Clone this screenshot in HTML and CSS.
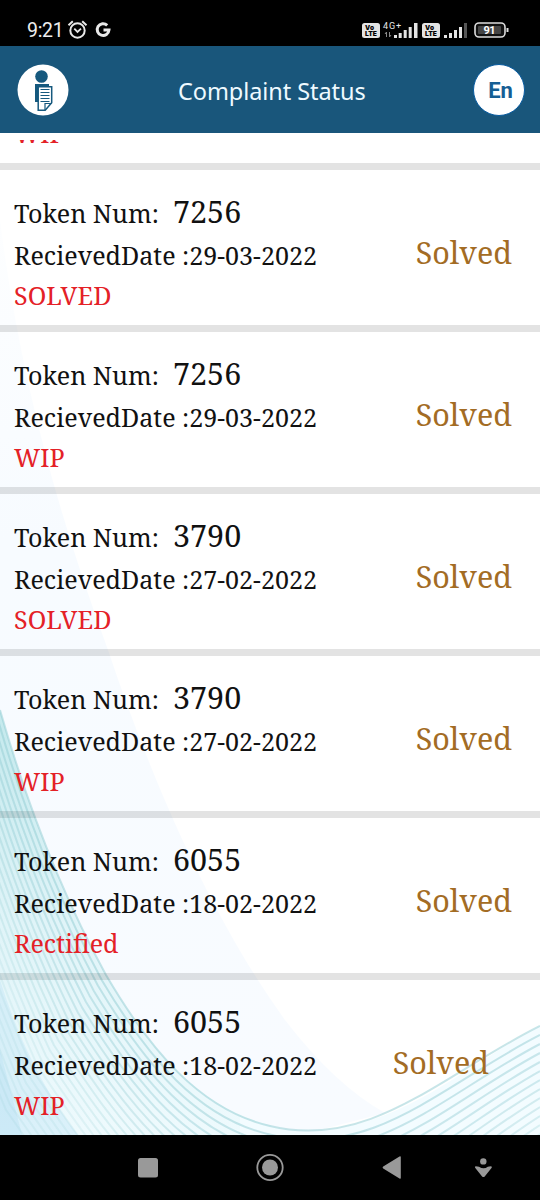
FILE: index.html
```html
<!DOCTYPE html>
<html lang="en">
<head>
<meta charset="utf-8">
<title>Complaint Status</title>
<link rel="stylesheet" href="styles.css">
</head>
<body>
<div class="phone">
  <div class="statusbar">
    <span class="clock">9:21</span>
    <svg class="status-icons" width="44" height="20" viewBox="0 0 44 20" fill="none" stroke="#e8e8e8">
      <circle cx="10.500" cy="10.500" r="7.200" stroke-width="2"/>
      <path d="M1.500 5.200 5.800 1.300M15.200 1.300 19.500 5.200" stroke-width="2"/>
      <path d="m7.300 8.700 3.200 3.200 3.500-3.200" stroke-width="1.800"/>
      <path d="M40.200 5.300A5.900 5.900 0 1 0 42 10H36.500" stroke-width="3"/>
    </svg>
    <svg class="signals" width="150" height="24" viewBox="0 0 150 24">
      <g fill="#e4e4e4">
        <rect x="2" y="5" width="18" height="15" rx="2.500"/>
        <rect x="62" y="5" width="18" height="15" rx="2.500"/>
        <path d="M34 17h3v3h-3zM38.700 15h3v5h-3zM43.700 12h3v8h-3zM48.700 9h3v11h-3zM54 5h3.500v15H54z"/>
        <path d="M84 17h3v3h-3zM89 15h3v5h-3zM94 12h3v8h-3zM99 9h3v11h-3z"/>
      </g>
      <path d="M104 5h3v15h-3z" fill="#555"/>
      <g class="volte"><text x="5" y="11.800" textLength="9">Vo</text><text x="5" y="18.300" textLength="12" lengthAdjust="spacingAndGlyphs">LTE</text>
      <text x="65" y="11.800" textLength="9">Vo</text><text x="65" y="18.300" textLength="12" lengthAdjust="spacingAndGlyphs">LTE</text></g>
      <text class="network" x="23" y="10.500" textLength="18">4G+</text>
      <path d="M26.500 19v-5l-1.500 2M29.500 14v5l1.500-2" stroke="#888" fill="none"/>
      <rect x="115" y="5" width="30" height="14" rx="4" fill="#111" stroke="#ddd" stroke-width="1.600"/>
      <rect x="118" y="8" width="23" height="8" rx="1" fill="#454545"/>
      <path d="M147.500 10v4" stroke="#ddd" stroke-width="2"/>
      <text class="charge" x="123.500" y="16" textLength="12">91</text>
    </svg>
  </div>
  <header class="header">
    <svg class="logo" width="52" height="52" viewBox="0 0 52 52">
      <circle cx="26" cy="26" r="25.500" fill="#fff"/>
      <circle cx="24.500" cy="12.500" r="6.300" fill="#16597e"/>
      <path d="M18 20h14v18H18z" fill="#16597e"/>
      <path d="M21.200 22.700h13.500v16l-6.500 7.500h-7z" fill="#fff" stroke="#16597e" stroke-width="1.500"/>
      <path d="M28 46v-6.500h6.500M23.500 25.500h9M23.500 28.500h9M23.500 31.500h9M23.500 34.500h9M23.500 37.500h9" fill="none" stroke="#16597e" stroke-width="1.200"/>
    </svg>
    <h1 class="title">Complaint Status</h1>
    <div class="language">En</div>
  </header>
  <main class="content">
    <svg class="waves" width="540" height="1002" viewBox="0 133 540 1002">
      <defs>
        <linearGradient id="teal" x1="0" y1="0" x2="0" y2="1">
          <stop offset="0" stop-color="#c4e9ed"/><stop offset=".5" stop-color="#e0f4f8"/><stop offset="1" stop-color="#eefafd"/>
        </linearGradient>
        <linearGradient id="pale" x1="0" y1="0" x2="0" y2="1">
          <stop offset="0" stop-color="#fdfeff"/><stop offset=".35" stop-color="#f7fbff"/><stop offset="1" stop-color="#f8fbff"/>
        </linearGradient>
      </defs>
      <path fill="url(#pale)" d="M0 220C20 380 60 520 108 650C160 805 220 930 285 1020Q335 1085 385 1113L300 1135H0Z"/>
      <path fill="url(#teal)" d="M0 710C30 815 65 900 106 975C150 1050 200 1108 270 1125L280 1135H0Z"/>
      <path fill="#f3fcff" d="M240 1117Q300 1140 353 1125C420 1110 470 1064 540 1026V1135H240Z"/>
      <path fill="#bfe3f5" opacity=".4" d="M0 980Q28 1070 78 1135H0Z"/>
      <path fill="#b3dcf2" opacity=".35" d="M0 1050 22 1135H0Z"/>
      <g id="strands" fill="none" stroke="#8fcbd1"></g>
    </svg>
    <div class="list" id="list"></div>
  </main>
  <nav class="navbar">
    <svg width="540" height="65" viewBox="0 0 540 65" fill="#999">
      <rect x="138" y="23" width="20" height="19.500" rx="2.500"/>
      <circle cx="270" cy="32.500" r="12.700" fill="none" stroke="#999" stroke-width="1.800"/>
      <circle cx="270" cy="32.500" r="8"/>
      <path d="M399.500 21.500q1.300-.8 1.300.8v20.400q0 1.600-1.300.8l-16.300-10q-1.300-1 0-2z"/>
      <circle cx="483.300" cy="26.400" r="3.200"/>
      <path d="M475.800 31.200q-1.300 0-.7 1.500l7 8.800q1.300 1.200 2.600 0l7-8.800q.6-1.500-.7-1.500l-3.200.6q-4 3-8.800 0z"/>
    </svg>
  </nav>
</div>
<script src="app.js"></script>
</body>
</html>
```
FILE: styles.css
```css
* { box-sizing: border-box; }
body { margin: 0; background: #000; }
.phone { width: 540px; height: 1200px; display: flex; flex-direction: column; overflow: hidden; }
.statusbar { height: 46px; flex: none; background: #000; display: flex; align-items: flex-start; padding: 18px 0 0 27px; }
.clock { font: 19.5px/24px Roboto, sans-serif; color: #eee; width: 40px; margin-top: 1px; letter-spacing: -.3px; }
.status-icons { margin-top: 2px; flex: none; }
.signals { margin-left: 249px; flex: none; }
.volte { font: 900 6.5px Inter, sans-serif; fill: #000; }
.network { font: 9px Roboto, sans-serif; fill: #e8e8e8; }
.charge { font: 700 11px Roboto, sans-serif; fill: #fff; }
.header { height: 87px; flex: none; background: #19567b; display: flex; align-items: center; padding: 0 15px 0 17px; }
.logo { flex: none; }
.title { margin: 2px 0 0 109px; width: 295px; flex: none; white-space: nowrap; font: 400 23.5px/34px "Noto Sans", sans-serif; letter-spacing: -.07px; color: #eefaff; }
.language { width: 52px; height: 52px; flex: none; border: 1.5px solid #075ba0; border-radius: 50%; background: #fff; color: #155e94; font: 700 22px/51px Roboto, sans-serif; text-align: center; padding-left: 3px; }
.content { height: 1002px; flex: none; background: #fff; display: grid; overflow: hidden; }
.waves, .list { grid-area: 1 / 1; }
.list { margin-top: 7px; height: 995px; overflow: hidden; display: flex; flex-direction: column; justify-content: flex-end; z-index: 1; font-family: "Noto Serif", "DejaVu Serif Condensed", serif; }
.card { height: 162px; flex: none; border-bottom: 7px solid rgba(0, 0, 0, .11); padding: 21px 28px 0 14px; display: flex; justify-content: space-between; white-space: nowrap; }
.card:last-child { height: 155px; border-bottom: 0; padding-right: 51px; }
.line { height: 40px; line-height: 40px; font-size: 25.080px; color: #111; display: flex; align-items: baseline; }
.line:first-child { height: 44px; }
.label { width: 159px; }
.number { font-size: 30.500px; line-height: 41px; }
.state { color: #e42127; }
.result { margin-top: 41px; height: 40px; font-size: 30.500px; line-height: 40px; color: #a36c24; }
```
FILE: app.js
```js
const complaints = [
  ['8120', '30-03-2022', 'WIP'],
  ['7256', '29-03-2022', 'SOLVED'],
  ['7256', '29-03-2022', 'WIP'],
  ['3790', '27-02-2022', 'SOLVED'],
  ['3790', '27-02-2022', 'WIP'],
  ['6055', '18-02-2022', 'Rectified'],
  ['6055', '18-02-2022', 'WIP']
];
// The first entry is scrolled under the header, only its state is still partly in view.
document.getElementById('list').innerHTML = complaints.map(([token, date, state], i) => `
  <article class="card">
    <div>
      <div class="line">${i ? `<span class="label">Token Num:</span><span class="number">${token}</span>` : ''}</div>
      <div class="line">${i ? `<span class="date">RecievedDate :${date}</span>` : ''}</div>
      <div class="line"><span class="state">${state}</span></div>
    </div>
    ${i ? '<div class="result">Solved</div>' : ''}
  </article>`).join('');

// Background strands fan out from the outermost wave.
let strands = '';
for (let i = 0; i < 26; i++) {
  const d = i * 9;
  strands += `<path opacity="${Math.max(.15, .5 - i * .02)}" stroke-width="2" d="M${-i * 4} ${710 + i * 3}C${30 - i * 4} ${815 + d * .4} ${65 - i * 4} ${900 + d * .5} ${106 - i * 4} ${975 + d * .6}C${150 - i * 3} ${1050 + d * .7} ${200 - i * 2} ${1110 + d} ${270 + i * 2} ${1126 + d}C${370 + i * 3} ${1150 + d} ${440 + i * 2} ${1076 + d} 540 ${1026 + d}"/>`;
}
document.getElementById('strands').innerHTML = strands;
```
